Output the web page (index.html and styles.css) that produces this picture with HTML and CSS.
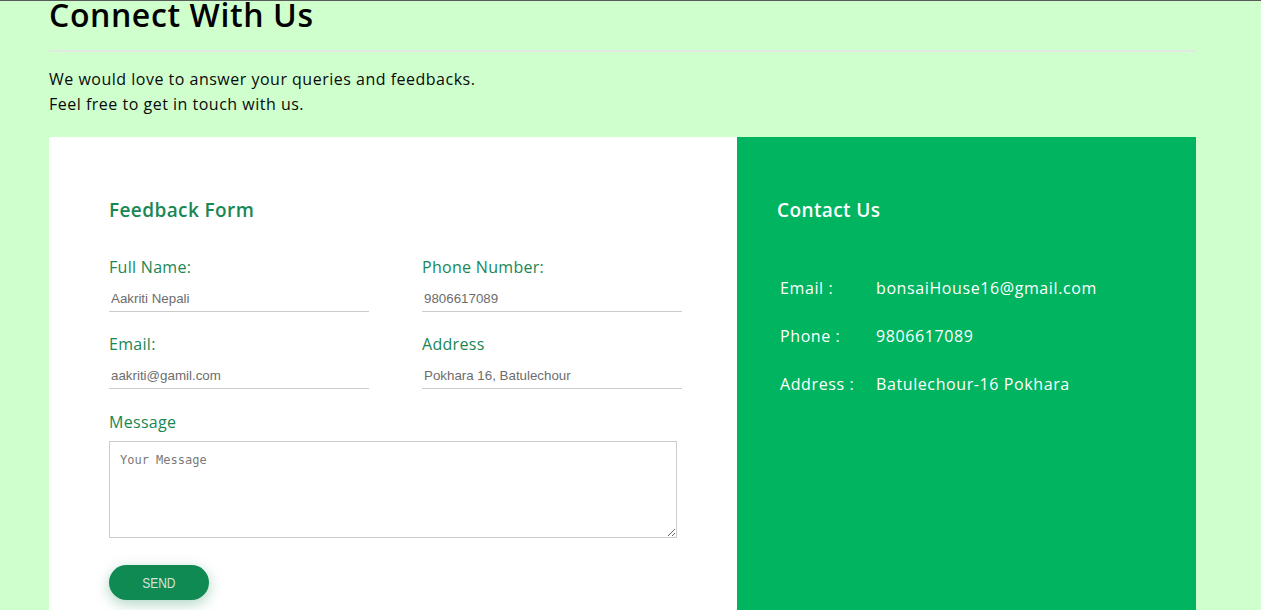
FILE: index.html
```html
<!DOCTYPE html>
<html lang="en">
<head>
<meta charset="utf-8">
<title>Connect With Us</title>
<link rel="stylesheet" href="styles.css">
</head>
<body>
<div class="topline"></div>
<main class="page">
  <h1 class="title">Connect With Us</h1>
  <hr class="rule">
  <p class="intro">We would love to answer your queries and feedbacks.<br>Feel free to get in touch with us.</p>
  <section class="panels">
    <div class="form-panel">
      <h2 class="form-title">Feedback Form</h2>
      <form class="form">
        <div class="grid">
          <div class="field">
            <label class="label">Full Name:</label>
            <input class="input" type="text" placeholder="Aakriti Nepali">
          </div>
          <div class="field">
            <label class="label">Phone Number:</label>
            <input class="input" type="text" placeholder="9806617089">
          </div>
          <div class="field">
            <label class="label">Email:</label>
            <input class="input" type="text" placeholder="aakriti@gamil.com">
          </div>
          <div class="field">
            <label class="label">Address</label>
            <input class="input" type="text" placeholder="Pokhara 16, Batulechour">
          </div>
        </div>
        <label class="label msg-label">Message</label>
        <textarea class="textarea" placeholder="Your Message"></textarea>
        <button class="send" type="button"><span class="send-text">SEND</span></button>
      </form>
    </div>
    <div class="contact-panel">
      <h2 class="contact-title">Contact Us</h2>
      <div class="contact-list">
        <span class="c-label">Email :</span><span class="c-value">bonsaiHouse16@gmail.com</span>
        <span class="c-label">Phone :</span><span class="c-value">9806617089</span>
        <span class="c-label">Address :</span><span class="c-value">Batulechour-16 Pokhara</span>
      </div>
    </div>
  </section>
</main>
</body>
</html>
```
FILE: styles.css
```css
* { box-sizing: border-box; }
html, body {
  margin: 0;
  padding: 0;
  background: #ceffcc;
  font-family: "Open Sans", "DejaVu Sans", sans-serif;
  letter-spacing: 0.5px;
  color: #111;
  overflow: hidden;
}
.topline {
  height: 1px;
  background: #5a5a5a;
}
.page {
  width: 1147px;
  margin: 0 0 0 49px;
}
.title {
  margin: -6px 0 0;
  font-size: 32px;
  line-height: 40px;
  font-weight: 600;
  letter-spacing: 0.6px;
  color: #000;
}
.rule {
  margin: 15px 0 0;
  border: none;
  height: 2px;
  background: #e4e8e4;
}
.intro {
  margin: 15px 0 0;
  font-size: 16px;
  line-height: 25px;
  color: #0a0a0a;
}
.panels {
  margin-top: 20px;
  display: flex;
}
.form-panel {
  width: 688px;
  background: #fff;
  padding: 61px 56px 60px 60px;
}
.form-title, .contact-title {
  margin: 0;
  font-size: 19px;
  line-height: 24px;
  font-weight: 600;
  letter-spacing: 0.4px;
}
.form-title { color: #198754; }
.form { margin-top: 33px; }
.grid {
  display: grid;
  grid-template-columns: 260px 260px;
  column-gap: 53px;
  row-gap: 20px;
}
.field { display: flex; flex-direction: column; }
.label {
  display: block;
  font-size: 16px;
  line-height: 24px;
  letter-spacing: 0.3px;
  color: #198754;
}
.input {
  margin-top: 11px;
  height: 22px;
  border: none;
  border-bottom: 1px solid #cccccc;
  padding: 0 2px 4px;
  font-family: "Liberation Sans", Arial, sans-serif;
  font-size: 13.33px;
  letter-spacing: 0;
  outline: none;
  background: transparent;
}
.input::placeholder { color: #6d6d6d; opacity: 1; }
.msg-label { margin-top: 21px; }
.textarea {
  display: block;
  margin-top: 7px;
  width: 568px;
  height: 97px;
  border: 1px solid #cccccc;
  padding: 11px 10px;
  font-family: "DejaVu Sans Mono", "Liberation Mono", monospace;
  font-size: 12px;
  letter-spacing: 0;
  resize: both;
}
.textarea::placeholder { color: #7a7a7a; opacity: 1; }
.send {
  display: flex;
  align-items: center;
  justify-content: center;
  margin-top: 27px;
  width: 100px;
  height: 35px;
  padding: 0;
  border: none;
  border-radius: 18px;
  background: #0f8a52;
  color: #d6e3dc;
  font-family: "Liberation Sans", Arial, sans-serif;
  font-size: 15px;
  letter-spacing: 0;
  box-shadow: 0 4px 14px rgba(25, 135, 84, 0.35);
}
.send-text {
  display: inline-block;
  transform: scaleX(0.8);
}
.contact-panel {
  width: 459px;
  background: #00b460;
  padding: 61px 40px;
  color: #fff;
}
.contact-title { color: #fff; }
.contact-list {
  margin-top: 54px;
  padding-left: 3px;
  display: grid;
  grid-template-columns: 96px auto;
  row-gap: 24px;
  font-size: 16px;
  line-height: 24px;
  letter-spacing: 0.6px;
}
```
